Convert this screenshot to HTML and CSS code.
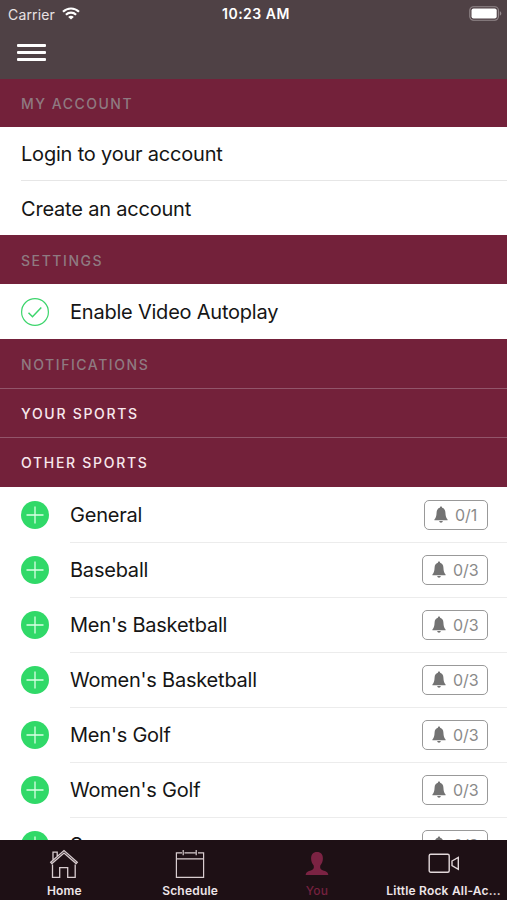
FILE: index.html
```html
<!DOCTYPE html>
<html lang="en">
<head>
<meta charset="utf-8">
<title>My Account</title>
<link rel="stylesheet" href="styles.css">
</head>
<body>
<svg class="defs" width="0" height="0" aria-hidden="true">
  <symbol id="plus" viewBox="0 0 28 28"><circle cx="14" cy="14" r="14" fill="#30d968"/><path d="M14 5.500v17M5.500 14h17" stroke="#d9ffe3" stroke-width="1.300"/></symbol>
  <symbol id="bell" viewBox="0 0 14 18"><path d="M7 .6c.8 0 1.100.5 1.100 1.200 2.200.6 3.200 2.400 3.300 4.700.2 3.600.7 5.400 2.200 6.900v.9H.4v-.9C1.900 11.900 2.400 10.100 2.600 6.500 2.700 4.200 3.700 2.400 5.900 1.800 5.900 1.100 6.200.6 7 .6zM5.200 15.100h3.600c-.2 1.100-.8 1.700-1.800 1.700s-1.600-.6-1.800-1.700z" fill="#737373"/></symbol>
</svg>
<div class="screen">
  <header class="top">
    <div class="status">
      <span class="carrier">Carrier</span>
      <svg class="wifi" width="18" height="13" viewBox="0 0 18 13" fill="none" stroke="#fff" stroke-width="2.200"><path d="M1 4.700C5.500.4 12.500.4 17 4.700M3.900 7.700c2.900-2.700 7.300-2.700 10.200 0"/><path d="M9 12.600 6.200 9.900c1.600-1.500 4-1.500 5.600 0z" fill="#fff" stroke="none"/></svg>
      <span class="time">10:23 AM</span>
      <svg class="battery" width="33" height="15" viewBox="0 0 33 15"><rect x=".8" y=".8" width="28.600" height="13.400" rx="3.600" fill="none" stroke="#94898c" stroke-width="1.100"/><rect x="2.500" y="2.500" width="25.200" height="10" rx="2" fill="#fff"/><path d="M30.800 5.300c2 .7 2 3.700 0 4.400z" fill="#94898c"/></svg>
    </div>
    <div class="menu"><i></i><i></i><i></i></div>
  </header>
  <main>
    <h2 class="section first">MY ACCOUNT</h2>
    <div class="link login"><span>Login to your account</span></div>
    <div class="link create"><span>Create an account</span></div>
    <h2 class="section settings">SETTINGS</h2>
    <div class="row autoplay">
      <svg class="mark" viewBox="0 0 28 28" fill="none" stroke="#3dd56c"><circle cx="14" cy="14" r="13.400" stroke-width="1.200"/><path d="M7.500 14.700l4 4L20.300 9.500" stroke-width="1.500"/></svg>
      <div class="body"><span class="name">Enable Video Autoplay</span></div>
    </div>
    <h2 class="section notif">NOTIFICATIONS</h2>
    <h2 class="section lined">YOUR SPORTS</h2>
    <h2 class="section lined last">OTHER SPORTS</h2>
    <div class="sports">
    <div class="row"><svg class="mark"><use href="#plus"/></svg><div class="body"><span class="name">General</span><span class="badge one"><svg class="bell"><use href="#bell"/></svg>0/1</span></div></div>
    <div class="row"><svg class="mark"><use href="#plus"/></svg><div class="body"><span class="name">Baseball</span><span class="badge"><svg class="bell"><use href="#bell"/></svg>0/3</span></div></div>
    <div class="row"><svg class="mark"><use href="#plus"/></svg><div class="body"><span class="name">Men's Basketball</span><span class="badge"><svg class="bell"><use href="#bell"/></svg>0/3</span></div></div>
    <div class="row"><svg class="mark"><use href="#plus"/></svg><div class="body"><span class="name">Women's Basketball</span><span class="badge"><svg class="bell"><use href="#bell"/></svg>0/3</span></div></div>
    <div class="row"><svg class="mark"><use href="#plus"/></svg><div class="body"><span class="name">Men's Golf</span><span class="badge"><svg class="bell"><use href="#bell"/></svg>0/3</span></div></div>
    <div class="row"><svg class="mark"><use href="#plus"/></svg><div class="body"><span class="name">Women's Golf</span><span class="badge"><svg class="bell"><use href="#bell"/></svg>0/3</span></div></div>
    <div class="row"><svg class="mark"><use href="#plus"/></svg><div class="body"><span class="name">S</span><span class="badge"><svg class="bell"><use href="#bell"/></svg>0/3</span></div></div>
    </div>
  </main>
  <nav class="tabs">
    <div class="tab home"><svg width="32" height="32" viewBox="0 0 32 32" fill="none" stroke="#d9cdd0" stroke-width="1.300"><path d="M4.500 16.500v12.800h7.200v-9.600h8v9.600h7.500V16.500M2.700 14.300 16 2.500l13.300 11.800-1.200 1.300L16 5 3.900 15.600zM5 12V4.200h4.200v4.200"/></svg><span>Home</span></div>
    <div class="tab"><svg width="32" height="32" viewBox="0 0 32 32" fill="none" stroke="#d9cdd0" stroke-width="1.200"><path d="M8 4.900H2.400v24.500h27.200V4.900H24M10.500 4.900h11M2.400 10.900h27.200M9.200 2v5.300M22.200 2v5.300"/></svg><span>Schedule</span></div>
    <div class="tab active"><svg width="32" height="32" viewBox="0 0 32 32" fill="#7b2343"><path d="M16 4c4 0 6 2.500 5.900 6.500 0 3-1.100 5.300-2.600 6.900-.5 2.600.1 4 2.300 4.800 3.600 1.100 5.500 1.800 5.700 4.900H4.700c.2-3.100 2.100-3.800 5.700-4.900 2.200-.8 2.800-2.200 2.300-4.800-1.500-1.600-2.600-3.900-2.600-6.900 0-4 1.900-6.500 5.900-6.500z"/></svg><span>You</span></div>
    <div class="tab"><svg width="32" height="32" viewBox="0 0 32 32" fill="none" stroke="#e2d8da" stroke-width="1.400"><rect x="1.200" y="6.300" width="20" height="18" rx="1.500"/><path d="M24 13l6.300-3.600v11.900L24 17.700z"/></svg><span class="long">Little Rock All-Ac...</span></div>
  </nav>
</div>
</body>
</html>
```
FILE: styles.css
```css
* { box-sizing: border-box; }
body { margin: 0; background: #fff; font-family: Inter, "Liberation Sans", sans-serif; color: #151515; }
.defs { display: none; }
.screen { height: 900px; display: flex; flex-direction: column; overflow: hidden; }
.top { height: 79px; flex: none; background: #4f4145; }
.status { display: grid; grid-template-columns: 54px 30px 1fr 38px; align-items: center; height: 28px; padding-left: 8px; color: #fff; font-size: 14px; }
.carrier { color: #e8e2e4; letter-spacing: .15px; }
.wifi { margin-top: -2px; }
.time { font-weight: 600; font-size: 14px; letter-spacing: .5px; padding-left: 130px; margin-top: -1px; }
.battery { margin-top: -1px; }
.menu { display: flex; flex-direction: column; gap: 4.500px; margin: 16px 0 0 17px; width: 29px; }
.menu i { height: 2.500px; background: #fff; border-radius: 1px; }
main { flex: 1; min-height: 0; overflow: hidden; }
.section { margin: 0; padding-left: 21px; height: 49px; display: flex; align-items: center; background: #73213a; color: #8f7a81; font-size: 14px; font-weight: 500; letter-spacing: 1.57px; }
.first { height: 48px; letter-spacing: 1.5px; }
.settings { padding-top: 1px; }
.notif { padding-top: 2px; }
.lined { color: #f8e8ed; border-top: 1px solid #92556a; letter-spacing: 1.7px; }
.last { height: 50px; }
.link { margin-left: 21px; height: 54px; display: flex; align-items: center; font-size: 20px; letter-spacing: -.2px; padding-top: 1px; }
.login { border-bottom: 1px solid #e6e6e6; }
.row { height: 55px; display: flex; align-items: center; padding-left: 21px; }
.mark { width: 28px; height: 28px; margin-right: 21px; flex: none; }
.body { flex: 1; height: 55px; display: flex; align-items: center; justify-content: space-between; padding-right: 19px; border-bottom: 1px solid #ececec; }
.autoplay .body { border: 0; padding-top: 1px; }
.sports { padding-top: 1px; }
.sports .mark { margin-top: -1px; }
.name { font-size: 20px; letter-spacing: -.22px; }
.badge { width: 66px; height: 30px; border: 1.5px solid #999; border-radius: 5px; display: flex; align-items: center; padding-left: 9px; gap: 7px; color: #8a8a8a; font-size: 16px; }
.one { width: 64px; }
.bell { width: 14px; height: 18px; flex: none; margin-top: -1px; }
.tabs { height: 60px; flex: none; background: #1e1015; display: grid; grid-template-columns: repeat(4, 1fr); }
.tab { display: flex; flex-direction: column; align-items: center; padding-top: 8px; color: #eee5e8; font-size: 12px; font-weight: 600; white-space: nowrap; }
.home { padding-left: 2px; }
.tab svg { flex: none; }
.tab span { line-height: 16px; margin-top: 3px; letter-spacing: .2px; }
.active { color: #75213f; }
.active span { font-weight: 500; }
```
